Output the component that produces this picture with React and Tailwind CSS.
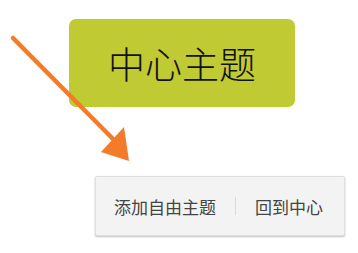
export default function App() {
  const font = { fontFamily: '"Noto Sans CJK SC", "Noto Sans", sans-serif' };
  return (
    <div className="relative w-[358px] h-[253px] bg-white overflow-hidden" style={font}>
      <div className="pt-[19px] pl-[69px]">
        <div className="w-[226px] h-[88px] rounded-[7px] bg-[#c0ca33] flex items-center justify-center text-[37px] font-light leading-none text-[#111]">
          中心主题
        </div>
      </div>
      <div className="pt-[69px] pl-[95px]">
        <div className="w-[250px] h-[60px] bg-[#f3f3f3] border border-[#dedede] rounded-[2px] shadow-[0_1px_2px_rgba(0,0,0,0.25)] flex items-center pl-[18px] text-[17px] leading-none text-[#444]">
          <span>添加自由主题</span>
          <span className="ml-[19px] w-px h-[18px] bg-[#dcdcdc]"></span>
          <span className="ml-[19px]">回到中心</span>
        </div>
      </div>
      <svg className="absolute left-0 top-0" width="358" height="253" viewBox="0 0 358 253">
        <line x1="13" y1="38" x2="115" y2="141" stroke="#f47b2a" strokeWidth="4.5" strokeLinecap="round" />
        <polygon points="101,152 129,161 124,127" fill="#f47b2a" />
      </svg>
    </div>
  );
}
